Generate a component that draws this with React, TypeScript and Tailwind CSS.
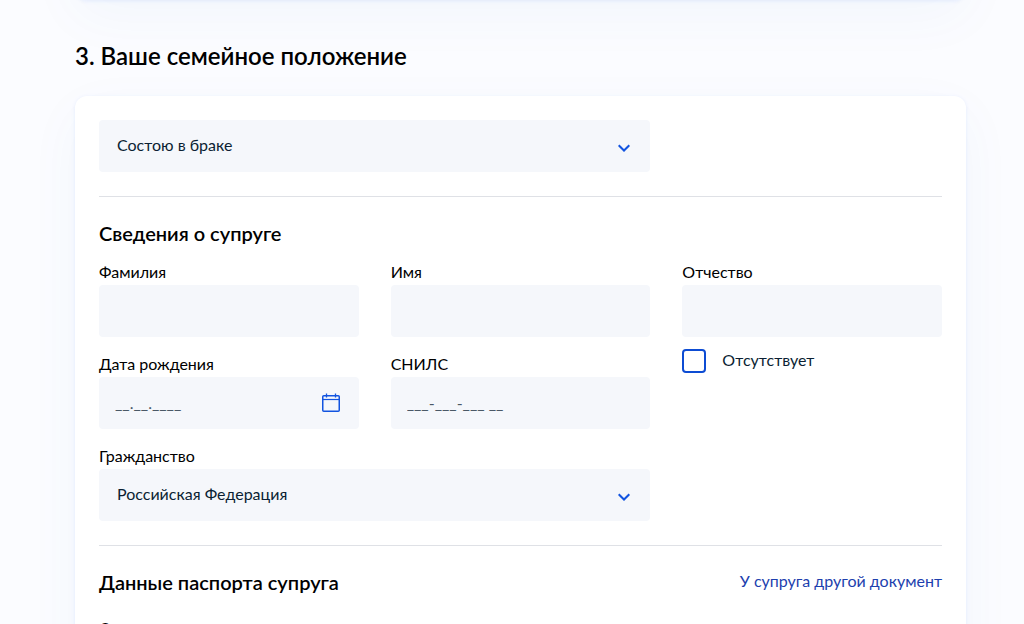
import clsx from "clsx"

const CARD_SHADOW =
  "shadow-[0_1px_4px_rgba(22,93,245,0.09),0_16px_56px_rgba(30,110,190,0.04)]"

const CalendarIcon: React.FC = () => (
  <svg width="20" height="20" viewBox="0 0 20 20" fill="none" stroke="#1254e0">
    <rect x="1.75" y="2.75" width="16.5" height="15.5" rx="1" strokeWidth="1.5" />
    <path d="M2 6.5h16" strokeWidth="1.2" />
    <path d="M5.5 0.5v4M14.5 0.5v4" strokeWidth="1.3" />
  </svg>
)

type FieldProps = {
  id: string
  label: string
  placeholder?: string
  icon?: React.ReactNode
}

const Field: React.FC<FieldProps> = ({ id, label, placeholder, icon }) => (
  <div className="pt-4">
    <label htmlFor={id} className="block pb-0.5 leading-[22px]">
      {label}
    </label>
    <div className="relative">
      <input
        id={id}
        type="text"
        placeholder={placeholder}
        className="block w-full h-13 px-4 pb-0.5 rounded bg-[#f5f7fb] text-[#0b1f33] placeholder:text-[#4a5866] outline-none"
      />
      {icon && (
        <button
          type="button"
          aria-label="Календарь"
          className="absolute inset-y-0 right-0 pl-4 pr-[18px]"
        >
          {icon}
        </button>
      )}
    </div>
  </div>
)

type SelectProps = {
  id: string
  options: Array<string>
  label?: string
}

const Select: React.FC<SelectProps> = ({ id, options, label }) => (
  <div className={clsx("col-span-2", label && "pt-4")}>
    {label && (
      <label htmlFor={id} className="block pb-0.5 leading-[22px]">
        {label}
      </label>
    )}
    <div className="relative">
      <select
        id={id}
        aria-label={label ?? "Семейное положение"}
        className="block w-full h-13 pl-[18px] pr-12 pb-0.5 rounded bg-[#f5f7fb] text-[#0b1f33] appearance-none outline-none"
      >
        {options.map((option) => (
          <option key={option}>{option}</option>
        ))}
      </select>
      <svg
        className="absolute right-5 bottom-5 pointer-events-none"
        width="12"
        height="8"
        viewBox="0 0 12 8"
        fill="none"
        stroke="#1254e0"
        strokeWidth="2"
      >
        <path d="M0.7 1.2 6 6.5l5.3-5.3" />
      </svg>
    </div>
  </div>
)

const App: React.FC = () => (
  <div className="h-screen overflow-hidden bg-[#fbfcff] pl-[75px] pr-[58px] font-['Lato',sans-serif] text-base text-black">
    <div className={clsx("h-24 -mt-24 rounded-xl bg-white", CARD_SHADOW)} />

    <h1 className="pt-10 pb-6 text-2xl leading-8 font-semibold">
      3. Ваше семейное положение
    </h1>

    <form className={clsx("p-6 pb-16 rounded-xl bg-white", CARD_SHADOW)}>
      <div className="grid grid-cols-3 gap-x-8">
        <Select
          id="marital-status"
          options={["Состою в браке", "Не состою в браке"]}
        />
      </div>

      <hr className="my-6 border-[#dfe1e6]" />

      <h2 className="text-xl leading-6 font-semibold">Сведения о супруге</h2>
      <div className="grid grid-cols-3 gap-x-8">
        <Field id="last-name" label="Фамилия" />
        <Field id="first-name" label="Имя" />
        <Field id="middle-name" label="Отчество" />

        <Field
          id="birth-date"
          label="Дата рождения"
          placeholder="__.__.____"
          icon={<CalendarIcon />}
        />
        <Field id="snils" label="СНИЛС" placeholder="___-___-___ __" />
        <div className="pt-3">
          <label className="flex gap-4 leading-[22px] text-[#0b1f33]">
            <input
              type="checkbox"
              className="size-6 appearance-none rounded border-2 border-[#0d4cd3] bg-white checked:bg-[#0d4cd3]"
            />
            Отсутствует
          </label>
        </div>

        <Select
          id="citizenship"
          label="Гражданство"
          options={["Российская Федерация", "Другое"]}
        />
      </div>

      <hr className="my-6 border-[#dfe1e6]" />

      <div className="flex items-start justify-between pb-[7px]">
        <h2 className="text-xl leading-6 font-semibold">
          Данные паспорта супруга
        </h2>
        <a href="#document" className="leading-[22px] text-[#1d3fae]">
          У супруга другой документ
        </a>
      </div>
      <div className="grid grid-cols-3 gap-x-8">
        <Field id="passport" label="Серия и номер" />
      </div>
    </form>
  </div>
)

export default App
